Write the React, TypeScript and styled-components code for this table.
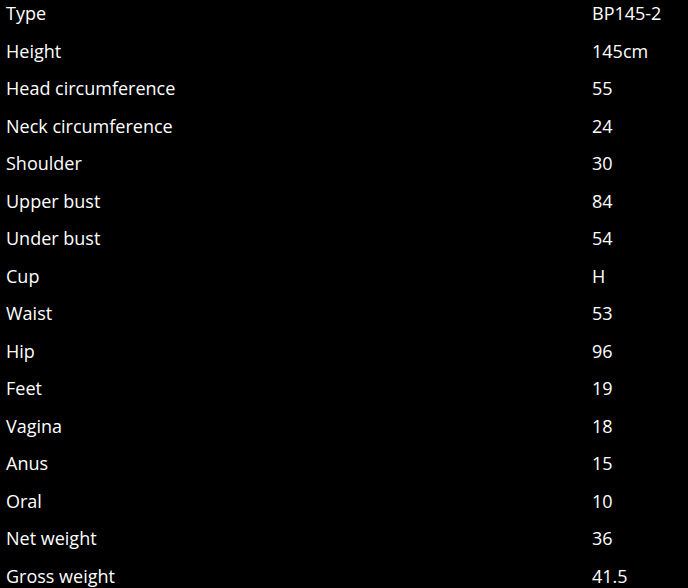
import { Fragment } from 'react'
import styled, { createGlobalStyle } from 'styled-components'

const GlobalStyle = createGlobalStyle`
  html, body {
    margin: 0;
    padding: 0;
    background: #000;
  }
`

const Table = styled.div`
  display: grid;
  grid-template-columns: 586px 1fr;
  grid-auto-rows: 37.5px;
  width: 688px;
  background: #000;
  color: #fff;
  font-family: 'Open Sans', 'Noto Sans', sans-serif;
  font-size: 18px;
  line-height: 24px;
`

const Cell = styled.div`
  padding: 1px 6px 0;
  white-space: nowrap;
`

const specs: [string, string][] = [
  ['Type', 'BP145-2'],
  ['Height', '145cm'],
  ['Head circumference', '55'],
  ['Neck circumference', '24'],
  ['Shoulder', '30'],
  ['Upper bust', '84'],
  ['Under bust', '54'],
  ['Cup', 'H'],
  ['Waist', '53'],
  ['Hip', '96'],
  ['Feet', '19'],
  ['Vagina', '18'],
  ['Anus', '15'],
  ['Oral', '10'],
  ['Net weight', '36'],
  ['Gross weight', '41.5'],
]

export default function App() {
  return (
    <>
      <GlobalStyle />
      <Table>
        {specs.map(([label, value]) => (
          <Fragment key={label}>
            <Cell>{label}</Cell>
            <Cell>{value}</Cell>
          </Fragment>
        ))}
      </Table>
    </>
  )
}
